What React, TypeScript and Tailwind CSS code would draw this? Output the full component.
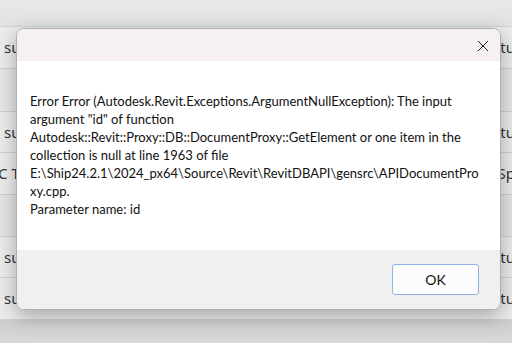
import React from "react";

type Row = { h: string; left: string; right: string; bg: string; lpad: string };

const rows: Row[] = [
  { h: "h-[42px]", left: "su", right: "tu", bg: "bg-[#ececec]", lpad: "pl-[4px]" },
  { h: "h-[43px]", left: "", right: "", bg: "bg-[#e6e6e6]", lpad: "pl-[4px]" },
  { h: "h-[41px]", left: "su", right: "tu", bg: "bg-[#ececec]", lpad: "pl-[4px]" },
  { h: "h-[42px]", left: "C T", right: "Sp", bg: "bg-[#ececec]", lpad: "-ml-[2px]" },
  { h: "h-[42px]", left: "", right: "", bg: "bg-[#e4e4e4]", lpad: "pl-[4px]" },
  { h: "h-[41px]", left: "su", right: "tu", bg: "bg-[#ececec]", lpad: "pl-[4px]" },
  { h: "h-[42px]", left: "su", right: "tu", bg: "bg-[#ececec]", lpad: "pl-[4px]" },
];

const lines = [
  "Error Error (Autodesk.Revit.Exceptions.ArgumentNullException): The input",
  'argument "id" of function',
  "Autodesk::Revit::Proxy::DB::DocumentProxy::GetElement or one item in the",
  "collection is null at line 1963 of file",
  "E:\\Ship24.2.1\\2024_px64\\Source\\Revit\\RevitDBAPI\\gensrc\\APIDocumentPro",
  "xy.cpp.",
  "Parameter name: id",
];

export default function App() {
  return (
    <div className="relative w-[512px] h-[343px] overflow-hidden bg-[#dcdcdc] font-['Noto_Sans',sans-serif]">
      <div className="flex flex-col">
        <div className="h-[27px] bg-gradient-to-b from-[#e9e9e9] to-[#e2e2e2] border-b border-[#d2d2d2]" />
        {rows.map((r, i) => (
          <div
            key={i}
            className={`flex items-center justify-between border-b border-[#d0d0d0] text-[15px] text-[#333] ${r.bg} ${r.h}`}
          >
            <span className={r.lpad}>{r.left}</span>
            <span className="mr-[-3px]">{r.right}</span>
          </div>
        ))}
        <div className="h-[30px] bg-gradient-to-b from-[#cfcfcf] to-[#dadada]" />
      </div>

      <div className="absolute left-[16px] top-[28px] w-[485px] h-[282px] rounded-[8px] overflow-hidden border border-[#b0b0b0] shadow-[0_6px_20px_rgba(0,0,0,0.3)] flex flex-col">
        <div className="h-[32px] bg-[#f6f1f0] flex items-center justify-end pr-[11px]">
          <svg width="12" height="12" viewBox="0 0 12 12" className="mt-[1px]">
            <path d="M1 1 L11 11 M11 1 L1 11" stroke="#222" strokeWidth="1" fill="none" />
          </svg>
        </div>
        <div className="flex-1 bg-white pt-[31px] pl-[13px] font-['Lato',sans-serif] text-[13px] leading-[18px] text-[#111]">
          {lines.map((l, i) => (
            <div key={i} className="whitespace-nowrap">
              {l}
            </div>
          ))}
        </div>
        <div className="h-[59px] bg-[#f0f0f0] flex items-center justify-end pr-[21px]">
          <button className="w-[87px] h-[31px] rounded-[3px] border border-[#8fb3e6] bg-[#fcfcfc] font-['Lato',sans-serif] text-[14px] text-[#111] flex items-center justify-center">
            OK
          </button>
        </div>
      </div>
    </div>
  );
}
